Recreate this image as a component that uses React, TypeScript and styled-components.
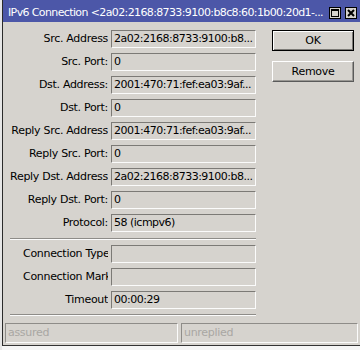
import React from "react";
import styled, { createGlobalStyle } from "styled-components";

const GlobalStyle = createGlobalStyle`
  html, body {
    margin: 0;
    padding: 0;
    background: #f3f3f3;
  }
  body {
    font-family: "DejaVu Sans", Verdana, sans-serif;
    font-size: 11px;
    letter-spacing: -0.3px;
    color: #000;
  }
`;

const Screen = styled.div`
  width: 360px;
  height: 350px;
  overflow: hidden;
  padding-left: 2px;
  box-sizing: border-box;
  background: linear-gradient(to right, #e6e6e6 0, #e6e6e6 2px, #f5f5f5 2px);
`;

const Window = styled.div`
  width: 358px;
  background: #d6d3ce;
  border-left: 1px solid #2a2a2a;
  border-bottom: 1px solid #333;
  box-sizing: border-box;
`;

const TitleBar = styled.div`
  height: 22px;
  background: #4c57a8;
  display: flex;
  align-items: flex-end;
  padding: 0 3px 2px 5px;
  box-sizing: border-box;
  gap: 4px;
`;

const TitleText = styled.div`
  flex: 1;
  color: #fff;
  white-space: nowrap;
  overflow: hidden;
  line-height: 15px;
  letter-spacing: -0.62px;
`;

const TitleButton = styled.div`
  width: 12px;
  height: 12px;
  flex: none;
  background: #d6d3ce;
  border: 1px solid #000;
  box-sizing: border-box;
  display: flex;
  align-items: center;
  justify-content: center;
  margin-bottom: 1px;
`;

const Body = styled.div`
  display: flex;
  padding-top: 8px;
`;

const Form = styled.div`
  width: 253px;
  display: flex;
  flex-direction: column;
`;

const Section = styled.div`
  display: flex;
  flex-direction: column;
  gap: 5px;
`;

const Row = styled.div<{ $labelWidth: number }>`
  display: grid;
  grid-template-columns: ${(p) => p.$labelWidth}px 145px;
  justify-content: end;
  column-gap: 3px;
  height: 18px;
`;

const Label = styled.div`
  text-align: right;
  white-space: nowrap;
  overflow: hidden;
  line-height: 18px;
`;

const Field = styled.div`
  height: 18px;
  box-sizing: border-box;
  border: 1px solid;
  border-color: #7c7a76 #fbfbfb #fbfbfb #7c7a76;
  padding: 0 2px;
  line-height: 16px;
  letter-spacing: -0.5px;
  white-space: nowrap;
  overflow: hidden;
`;

const Separator = styled.div<{ $top: number; $bottom: number }>`
  margin: ${(p) => p.$top}px 0 ${(p) => p.$bottom}px 7px;
  height: 0;
  border-top: 1px solid #8e8c88;
  border-bottom: 1px solid #fbfbfb;
`;

const Buttons = styled.div`
  margin-left: 16px;
  display: flex;
  flex-direction: column;
  gap: 10px;
`;

const Button = styled.div<{ $default?: boolean }>`
  width: 82px;
  height: 21px;
  box-sizing: border-box;
  display: flex;
  align-items: center;
  justify-content: center;
  border: 1px solid;
  border-color: ${(p) => (p.$default ? "#000" : "#fff #5a5a5a #5a5a5a #fff")};
  box-shadow: ${(p) =>
    p.$default
      ? "inset 1px 1px #fff, inset -1px -1px #7c7a76"
      : "inset -1px -1px #9a9894"};
`;

const StatusBar = styled.div`
  display: flex;
  gap: 3px;
  padding: 0 0 2px 2px;
`;

const StatusCell = styled.div<{ $width: number }>`
  width: ${(p) => p.$width}px;
  height: 20px;
  box-sizing: border-box;
  border: 1px solid;
  border-color: #8e8c88 #fbfbfb #fbfbfb #8e8c88;
  color: #a9a7a3;
  padding-left: 2px;
  line-height: 18px;
`;

const upper: [string, string][] = [
  ["Src. Address", "2a02:2168:8733:9100:b8..."],
  ["Src. Port:", "0"],
  ["Dst. Address:", "2001:470:71:fef:ea03:9af..."],
  ["Dst. Port:", "0"],
  ["Reply Src. Address", "2001:470:71:fef:ea03:9af..."],
  ["Reply Src. Port:", "0"],
  ["Reply Dst. Address", "2a02:2168:8733:9100:b8..."],
  ["Reply Dst. Port:", "0"],
  ["Protocol:", "58 (icmpv6)"],
];

const lower: [string, string][] = [
  ["Connection Type", ""],
  ["Connection Mark", ""],
  ["Timeout", "00:00:29"],
];

export default function App() {
  return (
    <>
      <GlobalStyle />
      <Screen>
        <Window>
          <TitleBar>
            <TitleText>
              IPv6 Connection &lt;2a02:2168:8733:9100:b8c8:60:1b00:20d1-...
            </TitleText>
            <TitleButton>
              <svg width="8" height="8" viewBox="0 0 8 8">
                <rect x="0.5" y="0.5" width="7" height="7" fill="none" stroke="#000" />
                <rect x="0" y="0" width="8" height="2" fill="#000" />
              </svg>
            </TitleButton>
            <TitleButton>
              <svg width="8" height="8" viewBox="0 0 8 8">
                <path d="M1 1 L7 7 M7 1 L1 7" stroke="#000" strokeWidth="2" />
              </svg>
            </TitleButton>
          </TitleBar>
          <Body>
            <Form>
              <Section>
                {upper.map(([label, value]) => (
                  <Row $labelWidth={100} key={label}>
                    <Label>{label}</Label>
                    <Field>{value}</Field>
                  </Row>
                ))}
              </Section>
              <Separator $top={6} $bottom={5} />
              <Section>
                {lower.map(([label, value]) => (
                  <Row $labelWidth={85} key={label}>
                    <Label>{label}</Label>
                    <Field>{value}</Field>
                  </Row>
                ))}
              </Section>
              <Separator $top={5} $bottom={7} />
            </Form>
            <Buttons>
              <Button $default>OK</Button>
              <Button>Remove</Button>
            </Buttons>
          </Body>
          <StatusBar>
            <StatusCell $width={173}>assured</StatusCell>
            <StatusCell $width={177}>unreplied</StatusCell>
          </StatusBar>
        </Window>
      </Screen>
    </>
  );
}
